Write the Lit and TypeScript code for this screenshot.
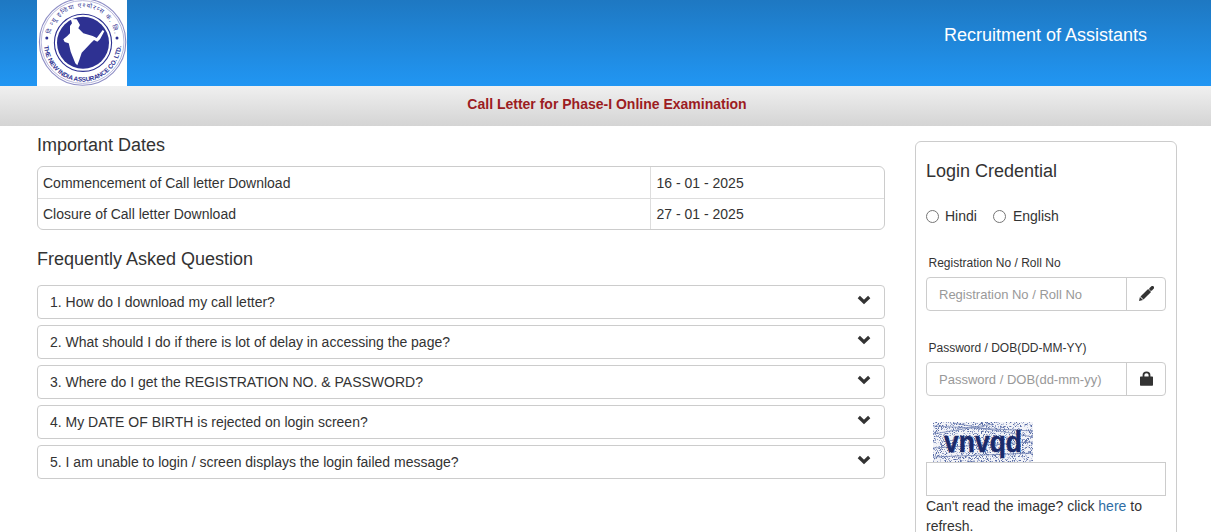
import { LitElement, html, css, svg } from "lit";
import { customElement } from "lit/decorators.js";

const faqs = [
  "1. How do I download my call letter?",
  "2. What should I do if there is lot of delay in accessing the page?",
  "3. Where do I get the REGISTRATION NO. & PASSWORD?",
  "4. My DATE OF BIRTH is rejected on login screen?",
  "5. I am unable to login / screen displays the login failed message?",
];

function noise() {
  let seed = 17;
  const rnd = () => ((seed = (seed * 1103515245 + 12345) & 0x7fffffff) / 0x7fffffff);
  const out = [];
  for (let y = 0; y < 40; y++) {
    for (let x = 0; x < 100; x++) {
      const r = rnd();
      if (r < 0.36) {
        out.push(svg`<rect x=${x} y=${y} width="1" height="1" fill=${r < 0.1 ? "#5a6ea6" : r < 0.24 ? "#8f9cc4" : "#c3cae0"}></rect>`);
      }
    }
  }
  return out;
}
const captchaNoise = noise();

@customElement("app-root")
export class AppRoot extends LitElement {
  static styles = css`
    :host {
      display: block;
      height: 532px;
      overflow: hidden;
      background: #fff;
      font-family: "Liberation Sans", Arial, sans-serif;
      font-size: 14px;
      line-height: 20px;
      color: #333;
    }
    .head {
      height: 86px;
      display: flex;
      justify-content: space-between;
      align-items: center;
      padding: 0 64px 0 37px;
      background: linear-gradient(#1e78c2, #2196f3);
    }
    .logo {
      display: block;
      width: 90px;
      height: 86px;
      background: #fff;
    }
    .title {
      color: #fff;
      font-size: 18px;
      line-height: 20px;
      margin-bottom: 16px;
    }
    .band {
      height: 40px;
      display: flex;
      align-items: center;
      justify-content: center;
      padding: 0 0 4px 3px;
      box-sizing: border-box;
      background: linear-gradient(#f0f0f0, #d4d4d4);
      color: #9c1c22;
      font-weight: bold;
      font-size: 14px;
    }
    .main {
      display: grid;
      grid-template-columns: 848px 262px;
      column-gap: 30px;
      padding-left: 37px;
    }
    h3 {
      margin: 0;
      font-weight: 400;
      font-size: 18px;
      line-height: 20px;
    }
    .h-dates { padding-top: 9px; }
    .dates {
      margin-top: 11px;
      border: 1px solid #ccc;
      border-radius: 6px;
    }
    .dates .row {
      display: grid;
      grid-template-columns: 612px 1fr;
      height: 30px;
      line-height: 30px;
    }
    .dates .row.first {
      height: 31px;
      padding-top: 1px;
      box-sizing: border-box;
    }
    .dates .row + .row { border-top: 1px solid #ddd; }
    .dates .row > div { padding-left: 5px; }
    .dates .row > div + div { border-left: 1px solid #ddd; padding-left: 5.5px; }
    .dates .row.first > div { margin-top: -1px; padding-top: 1px; }
    .h-faq { margin-top: 19px; }
    .faqs {
      margin-top: 16px;
      display: flex;
      flex-direction: column;
      gap: 6px;
    }
    .faq {
      height: 34px;
      box-sizing: border-box;
      border: 1px solid #ccc;
      border-radius: 4px;
      padding: 0 13px 0 12px;
      display: flex;
      align-items: center;
      justify-content: space-between;
    }
    .chev { width: 14px; height: 10px; margin-bottom: 5px; }
    .panel {
      margin-top: 15px;
      border: 1px solid #ccc;
      border-radius: 6px;
      padding: 0 10px;
      height: 420px;
    }
    .panel h3 { padding-top: 19px; }
    .radios {
      display: flex;
      align-items: center;
      margin-top: 25px;
      height: 20px;
    }
    .radio {
      width: 13px;
      height: 13px;
      box-sizing: border-box;
      border: 1px solid #767676;
      border-radius: 50%;
      margin-right: 6px;
    }
    .radio.second { margin-right: 7px; }
    .hindi { margin-right: 16px; }
    .lbl {
      font-size: 12px;
      line-height: 17px;
      padding-left: 2.5px;
    }
    .l1, .l2 { margin-top: 29px; }
    .group {
      margin-top: 5px;
      display: flex;
      height: 34px;
      box-sizing: border-box;
      border: 1px solid #ccc;
      border-radius: 4px;
    }
    .ph {
      flex: 1;
      padding-left: 12px;
      font-size: 13px;
      line-height: 33px;
      color: #999;
    }
    .addon {
      width: 38px;
      border-left: 1px solid #ccc;
      display: flex;
      align-items: center;
      justify-content: center;
    }
    .icon-up { margin-bottom: 2px; }
    .captcha { display: block; margin: 26px 0 0 7px; width: 100px; height: 40px; }
    .cinput {
      height: 34px;
      box-sizing: border-box;
      border: 1px solid #ccc;
    }
    .help { margin-top: 0; }
    .help span { color: #2f6ea5; }
  `;

  render() {
    return html`
      <div class="head">
        <svg class="logo" viewBox="0 0 90 86">
          <rect width="90" height="86" fill="#fff"></rect>
          <circle cx="45.6" cy="42" r="43.2" fill="none" stroke="#8f8fc6" stroke-width="1.1"></circle>
          <circle cx="45.6" cy="42" r="41.4" fill="none" stroke="#b9b9dc" stroke-width="1"></circle>
          <defs>
            <path id="arcB" d="M 7 43 A 38.6 38.6 0 0 0 84.2 43"></path>
            <path id="arcT" d="M 13 40 A 32.6 32.6 0 0 1 78.2 40"></path>
          </defs>
          <text font-family="Liberation Sans" font-size="6.4" font-weight="bold" fill="#2e3192">
            <textPath href="#arcB" startOffset="3" textLength="115" lengthAdjust="spacing">THE NEW INDIA ASSURANCE CO. LTD.</textPath>
          </text>
          <text font-family="Noto Sans, DejaVu Sans, sans-serif" font-size="6.2" fill="#2e3192">
            <textPath href="#arcT" startOffset="6" textLength="90" lengthAdjust="spacing">दि न्यू इन्डिया एश्योरन्स कं. लि.</textPath>
          </text>
          <circle cx="9.8" cy="38" r="1.5" fill="#2e3192"></circle>
          <circle cx="80" cy="38" r="1.5" fill="#2e3192"></circle>
          <circle cx="46" cy="42.8" r="28.6" fill="none" stroke="#2e3192" stroke-width="1.1"></circle>
          <circle cx="46" cy="42.8" r="26" fill="#2e3192"></circle>
          <path fill="#fff" d="M33.7 19 L39.7 19.3 L43 25 L41.3 28.3 L46.3 33.3 L55.7 36 L59.7 38 L65.7 30 L67.3 31.3 L63 39.3 L60.3 41.7 L57 40 L53.7 43.3 L49 48.3 L44.7 52.7 L42.3 60 L40.3 65.3 L38.3 63.3 L36.3 58.3 L33.7 51.7 L31.7 43.3 L27.7 42 L26.3 39.3 L30.3 36 L33 33.3 L33 26 L35 23.3 Z"></path>
        </svg>
        <div class="title">Recruitment of Assistants</div>
      </div>
      <div class="band">Call Letter for Phase-I Online Examination</div>
      <div class="main">
        <div>
          <h3 class="h-dates">Important Dates</h3>
          <div class="dates">
            <div class="row first"><div>Commencement of Call letter Download</div><div>16 - 01 - 2025</div></div>
            <div class="row"><div>Closure of Call letter Download</div><div>27 - 01 - 2025</div></div>
          </div>
          <h3 class="h-faq">Frequently Asked Question</h3>
          <div class="faqs">
            ${faqs.map(
              (q) => html`<div class="faq">
                <span>${q}</span>
                <svg class="chev" viewBox="0 0 14 10"><path d="M1.8 2 L7 7 L12.2 2" fill="none" stroke="#333" stroke-width="3.2"></path></svg>
              </div>`
            )}
          </div>
        </div>
        <div class="panel">
          <h3>Login Credential</h3>
          <div class="radios">
            <div class="radio"></div><span class="hindi">Hindi</span>
            <div class="radio second"></div><span>English</span>
          </div>
          <div class="lbl l1">Registration No / Roll No</div>
          <div class="group">
            <div class="ph">Registration No / Roll No</div>
            <div class="addon">
              <svg class="icon-up" width="15" height="15" viewBox="0 0 15 15">
                <path fill="#333" d="M0 15 L0.9 11 L4 14.1 Z"></path>
                <path d="M3 12 L10.6 4.4" stroke="#333" stroke-width="4.2" fill="none"></path>
                <path d="M12 3 L13.4 1.6" stroke="#333" stroke-width="3.4" fill="none" stroke-linecap="round"></path>
              </svg>
            </div>
          </div>
          <div class="lbl l2">Password / DOB(DD-MM-YY)</div>
          <div class="group">
            <div class="ph">Password / DOB(dd-mm-yy)</div>
            <div class="addon">
              <svg class="icon-up" width="13" height="15" viewBox="0 0 13 15"><path fill="#333" d="M2.6 6 V4 Q2.6 0.5 6.5 0.5 Q10.4 0.5 10.4 4 V6 H8.6 V4 Q8.6 2.2 6.5 2.2 Q4.4 2.2 4.4 4 V6 Z M0.7 5.5 H12.3 Q13 5.5 13 6.2 V14 Q13 14.7 12.3 14.7 H0.7 Q0 14.7 0 14 V6.2 Q0 5.5 0.7 5.5 Z"></path></svg>
            </div>
          </div>
          <svg class="captcha" viewBox="0 0 100 40">
            <rect width="100" height="40" fill="#f2f3f8"></rect>
            ${captchaNoise}
            <path d="M0 4 L100 9 M0 12 L60 2 M20 1 L100 15 M0 26 L100 20 M0 35 L100 31" stroke="#6c7db0" stroke-width="1" fill="none" opacity="0.75"></path>
            <text x="11" y="30" font-family="Liberation Sans" font-size="30" font-weight="bold" fill="#1a2a6a" stroke="#1a2a6a" stroke-width="0.5" textLength="78" lengthAdjust="spacingAndGlyphs">vnvqd</text>
          </svg>
          <div class="cinput"></div>
          <div class="help">Can't read the image? click <span>here</span> to refresh.</div>
        </div>
      </div>
    `;
  }
}
